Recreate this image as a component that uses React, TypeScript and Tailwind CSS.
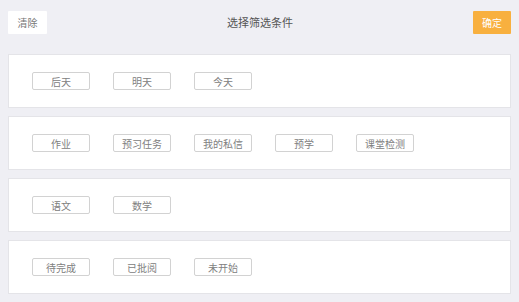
import React from 'react'

const groups: string[][] = [
  ['后天', '明天', '今天'],
  ['作业', '预习任务', '我的私信', '预学', '课堂检测'],
  ['语文', '数学'],
  ['待完成', '已批阅', '未开始'],
]

const font = { fontFamily: '"Noto Sans CJK SC", "Liberation Sans", sans-serif' }

const App: React.FC = () => {
  return (
    <div className="w-[519px] h-[302px] bg-[#efeff4] px-[8px] pt-[11px]" style={font}>
      <div className="flex items-center justify-between h-[23px]">
        <button className="w-[39px] h-[23px] bg-white text-[10px] text-[#777] rounded-[1px]">清除</button>
        <div className="text-[11px] text-[#555]">选择筛选条件</div>
        <button className="w-[38px] h-[23px] bg-[#f8b03f] text-[10px] text-white rounded-[1px]">确定</button>
      </div>
      <div className="mt-[20px] flex flex-col gap-[8px]">
        {groups.map((items, i) => (
          <div key={i} className="h-[54px] bg-white border border-[#e4e4e8] flex items-center gap-[23px] pl-[23px]">
            {items.map((item) => (
              <div
                key={item}
                className="w-[58px] h-[18px] border border-[#d2d2d2] rounded-[2px] flex items-center justify-center text-[10px] text-[#808080]"
              >
                {item}
              </div>
            ))}
          </div>
        ))}
      </div>
    </div>
  )
}

export default App
